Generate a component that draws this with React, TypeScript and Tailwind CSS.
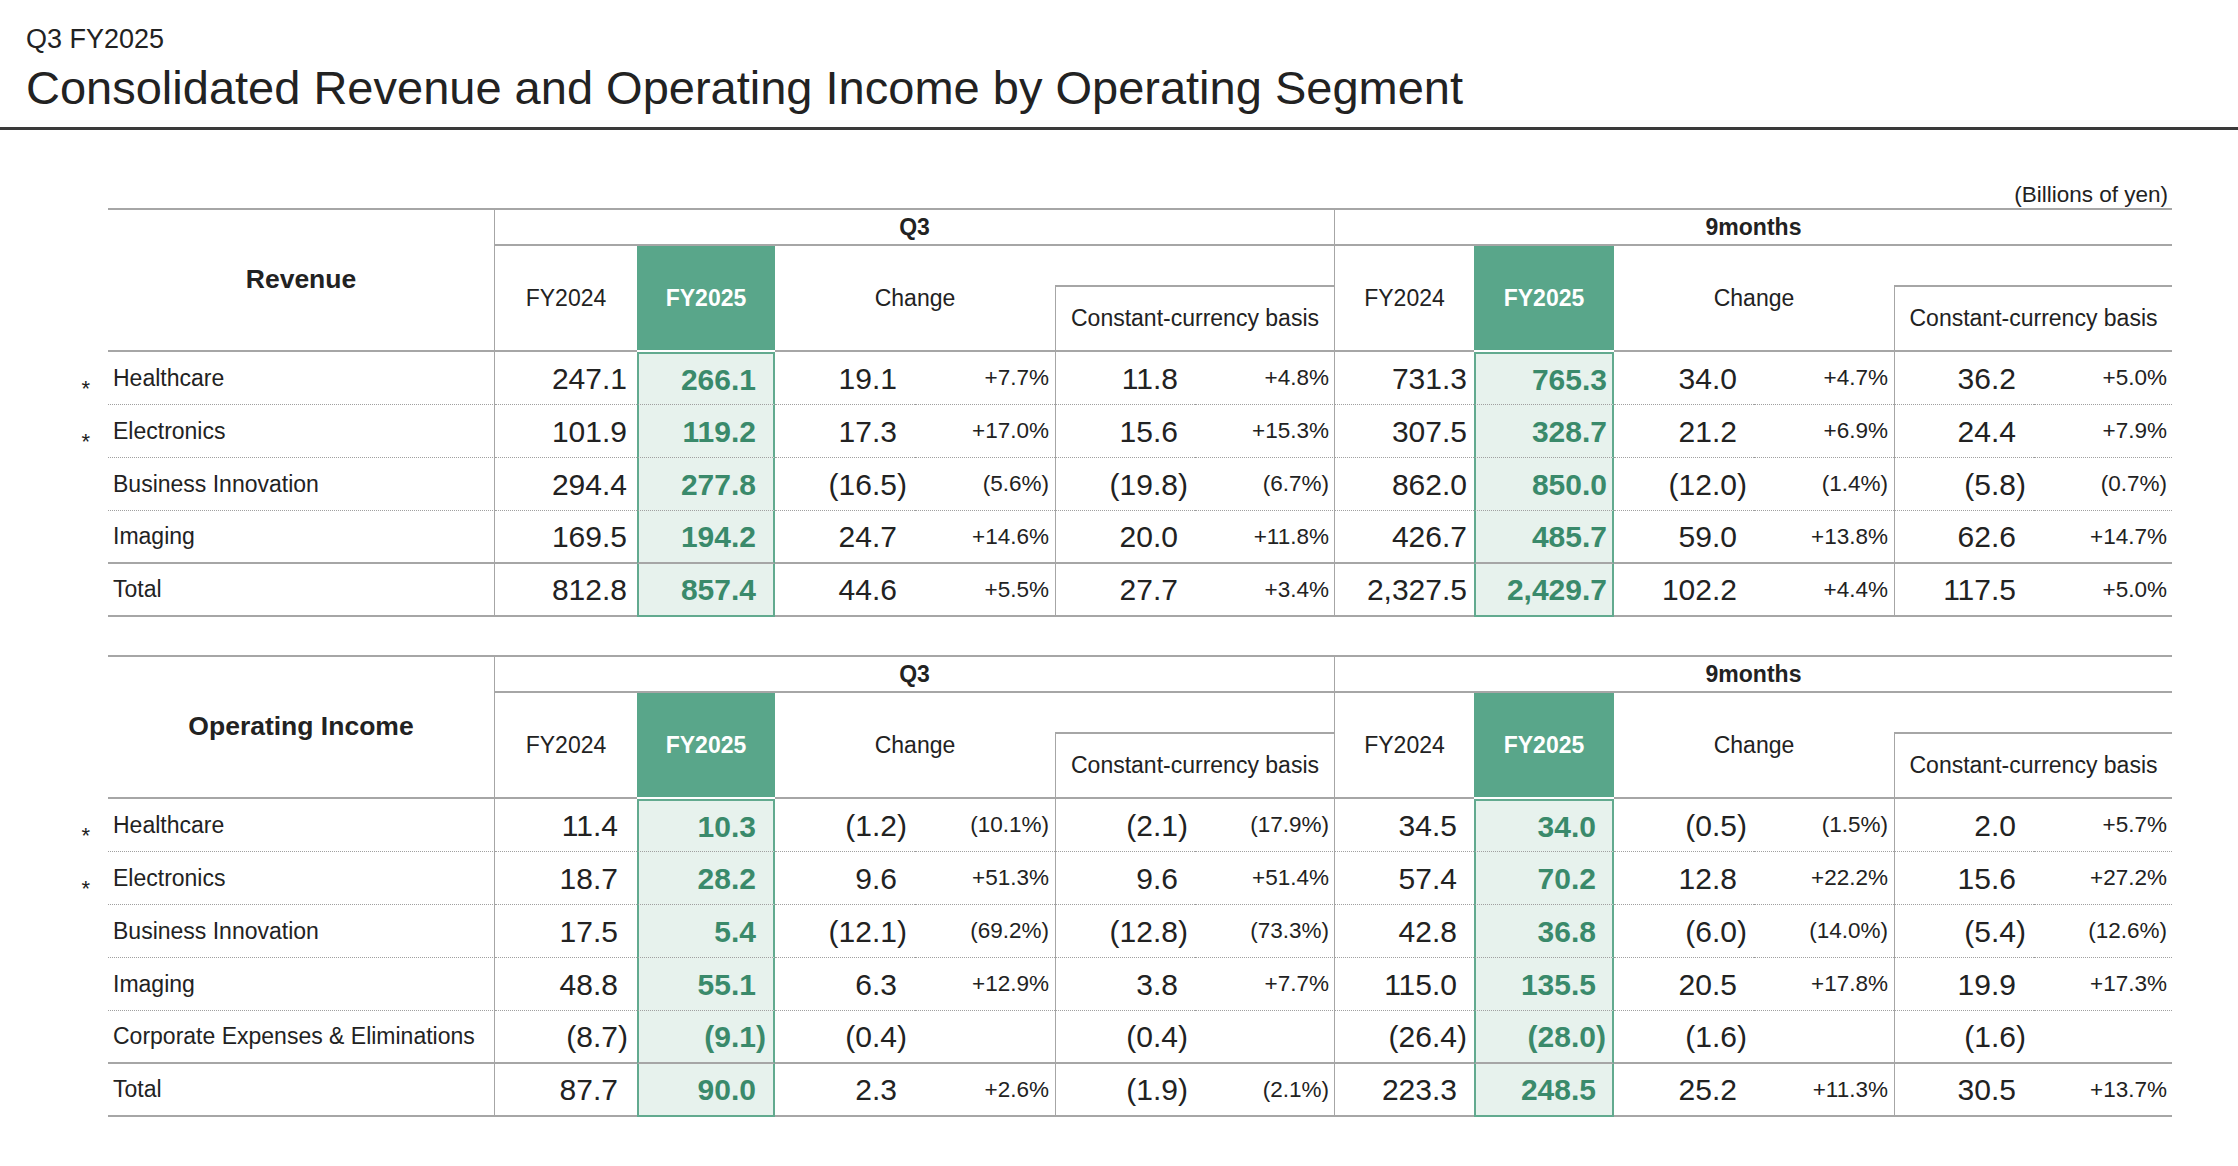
import React from 'react';

type Row = { label: string; star?: boolean; v: string[] };

const revenueRows: Row[] = [
  { label: 'Healthcare', star: true, v: ['247.1', '266.1', '19.1', '+7.7%', '11.8', '+4.8%', '731.3', '765.3', '34.0', '+4.7%', '36.2', '+5.0%'] },
  { label: 'Electronics', star: true, v: ['101.9', '119.2', '17.3', '+17.0%', '15.6', '+15.3%', '307.5', '328.7', '21.2', '+6.9%', '24.4', '+7.9%'] },
  { label: 'Business Innovation', v: ['294.4', '277.8', '(16.5)', '(5.6%)', '(19.8)', '(6.7%)', '862.0', '850.0', '(12.0)', '(1.4%)', '(5.8)', '(0.7%)'] },
  { label: 'Imaging', v: ['169.5', '194.2', '24.7', '+14.6%', '20.0', '+11.8%', '426.7', '485.7', '59.0', '+13.8%', '62.6', '+14.7%'] },
  { label: 'Total', v: ['812.8', '857.4', '44.6', '+5.5%', '27.7', '+3.4%', '2,327.5', '2,429.7', '102.2', '+4.4%', '117.5', '+5.0%'] },
];

const incomeRows: Row[] = [
  { label: 'Healthcare', star: true, v: ['11.4', '10.3', '(1.2)', '(10.1%)', '(2.1)', '(17.9%)', '34.5', '34.0', '(0.5)', '(1.5%)', '2.0', '+5.7%'] },
  { label: 'Electronics', star: true, v: ['18.7', '28.2', '9.6', '+51.3%', '9.6', '+51.4%', '57.4', '70.2', '12.8', '+22.2%', '15.6', '+27.2%'] },
  { label: 'Business Innovation', v: ['17.5', '5.4', '(12.1)', '(69.2%)', '(12.8)', '(73.3%)', '42.8', '36.8', '(6.0)', '(14.0%)', '(5.4)', '(12.6%)'] },
  { label: 'Imaging', v: ['48.8', '55.1', '6.3', '+12.9%', '3.8', '+7.7%', '115.0', '135.5', '20.5', '+17.8%', '19.9', '+17.3%'] },
  { label: 'Corporate Expenses & Eliminations', v: ['(8.7)', '(9.1)', '(0.4)', '', '(0.4)', '', '(26.4)', '(28.0)', '(1.6)', '', '(1.6)', ''] },
  { label: 'Total', v: ['87.7', '90.0', '2.3', '+2.6%', '(1.9)', '(2.1%)', '223.3', '248.5', '25.2', '+11.3%', '30.5', '+13.7%'] },
];

// right padding of each value column (digits end), per table
const revenuePads = ['pr-[10px]', 'pr-[17px]', 'pr-[18px]', 'pr-[6px]', 'pr-[17px]', 'pr-[5px]', 'pr-[7px]', 'pr-[5px]', 'pr-[17px]', 'pr-[6px]', 'pr-[18px]', 'pr-[5px]'];
const incomePads = ['pr-[19px]', 'pr-[17px]', 'pr-[18px]', 'pr-[6px]', 'pr-[17px]', 'pr-[5px]', 'pr-[17px]', 'pr-[16px]', 'pr-[17px]', 'pr-[6px]', 'pr-[18px]', 'pr-[5px]'];

// extra borders per value column
const colBorders = ['', '', '', '', 'border-l border-l-[#a6a6a6]', 'border-r border-r-[#a6a6a6]', '', '', '', '', 'border-l border-l-[#a6a6a6]', ''];
const isGreen = [false, true, false, false, false, false, false, true, false, false, false, false];
const isPct = [false, false, false, true, false, true, false, false, false, true, false, true];

const grid =
  'grid grid-cols-[28px_387px_142px_138px_140px_140px_140px_140px_139px_140px_140px_140px_140px_138px]';

function Num({ value }: { value: string }) {
  if (value.startsWith('(') && value.endsWith(')')) {
    return (
      <span>
        ({value.slice(1, -1)}
        <span className="-mr-[0.333em]">)</span>
      </span>
    );
  }
  return <span>{value}</span>;
}

function Header({ title }: { title: string }) {
  return (
    <div className={`${grid} grid-rows-[38px_39px_67px] text-[23px]`}>
      <div className="col-start-1 row-start-1 row-span-3" />
      <div className="col-start-2 row-start-1 row-span-3 flex items-center justify-center border-t-2 border-b-2 border-r border-t-[#a6a6a6] border-b-[#a6a6a6] border-r-[#a6a6a6] text-[26.5px] font-bold">
        {title}
      </div>

      {/* Q3 */}
      <div className="col-start-3 col-span-6 row-start-1 flex items-center justify-center border-t-2 border-b-2 border-r border-[#a6a6a6] font-bold">
        Q3
      </div>
      <div className="col-start-3 row-start-2 row-span-2 flex items-center justify-center border-b-2 border-[#a6a6a6]">
        FY2024
      </div>
      <div className="col-start-4 row-start-2 row-span-2 flex items-center justify-center border-b-2 border-white bg-[#59a68a] font-bold text-white">
        FY2025
      </div>
      <div className="col-start-5 col-span-2 row-start-2 row-span-2 flex items-center justify-center border-b-2 border-[#a6a6a6]">
        Change
      </div>
      <div className="col-start-7 col-span-2 row-start-2 border-r border-[#a6a6a6]" />
      <div className="col-start-7 col-span-2 row-start-3 flex items-center justify-center border-t-2 border-b-2 border-x border-[#a6a6a6]">
        Constant-currency basis
      </div>

      {/* 9months */}
      <div className="col-start-9 col-span-6 row-start-1 flex items-center justify-center border-t-2 border-b-2 border-[#a6a6a6] font-bold">
        9months
      </div>
      <div className="col-start-9 row-start-2 row-span-2 flex items-center justify-center border-b-2 border-[#a6a6a6]">
        FY2024
      </div>
      <div className="col-start-10 row-start-2 row-span-2 flex items-center justify-center border-b-2 border-white bg-[#59a68a] font-bold text-white">
        FY2025
      </div>
      <div className="col-start-11 col-span-2 row-start-2 row-span-2 flex items-center justify-center border-b-2 border-[#a6a6a6]">
        Change
      </div>
      <div className="col-start-13 col-span-2 row-start-2" />
      <div className="col-start-13 col-span-2 row-start-3 flex items-center justify-center border-t-2 border-b-2 border-l border-[#a6a6a6]">
        Constant-currency basis
      </div>
    </div>
  );
}

function Body({ rows, pads }: { rows: Row[]; pads: string[] }) {
  return (
    <div className={`${grid} auto-rows-[53px]`}>
      {rows.map((r, i) => {
        const first = i === 0;
        const last = i === rows.length - 1;
        const solid = last || i === rows.length - 2;
        const bottom = solid
          ? 'border-b-2 border-b-[#a6a6a6]'
          : 'border-b border-b-[#a0a0a0] [border-bottom-style:dotted]!';
        return (
          <React.Fragment key={r.label}>
            <div className="flex items-center justify-end pr-[18px] pt-[21px] text-[22px] leading-none">
              {r.star ? '*' : ''}
            </div>
            <div className={`flex items-center border-r border-r-[#a6a6a6] pl-[5px] text-[23px] ${bottom}`}>
              {r.label}
            </div>
            {r.v.map((val, j) => {
              let cls = `flex items-center justify-end whitespace-nowrap ${pads[j]} ${colBorders[j]}`;
              if (isGreen[j]) {
                cls += ' bg-[#e7f2ed] border-x-2 border-x-[#62aa8f] font-bold text-[#3a8a6b] text-[30px]';
                if (first) cls += ' border-t-2 border-t-[#62aa8f]';
                cls += last ? ' border-b-2 border-b-[#62aa8f]' : ` ${bottom}`;
              } else {
                cls += ` ${bottom} ${isPct[j] ? 'text-[22.5px]' : 'text-[30px]'}`;
              }
              return (
                <div key={j} className={cls}>
                  {isPct[j] ? val : <Num value={val} />}
                </div>
              );
            })}
          </React.Fragment>
        );
      })}
    </div>
  );
}

export default function App() {
  return (
    <div className="h-[1166px] w-[2238px] overflow-hidden bg-white font-['Liberation_Sans',Arial,Helvetica,sans-serif] text-[#222]">
      <header className="h-[130px] border-b-[3px] border-[#3a3a3a] pl-[26px] pt-[26px]">
        <div className="text-[27px] leading-none">Q3 FY2025</div>
        <h1 className="mt-[11px] text-[47px] leading-none">Consolidated Revenue and Operating Income by Operating Segment</h1>
      </header>

      <div className="pl-[80px]">
        <div className="mt-[54px] h-[24px] w-[2092px] text-right text-[22.5px] leading-none pr-[4px]">(Billions of yen)</div>

        <Header title="Revenue" />
        <Body rows={revenueRows} pads={revenuePads} />

        <div className="h-[38px]" />

        <Header title="Operating Income" />
        <Body rows={incomeRows} pads={incomePads} />
      </div>
    </div>
  );
}
